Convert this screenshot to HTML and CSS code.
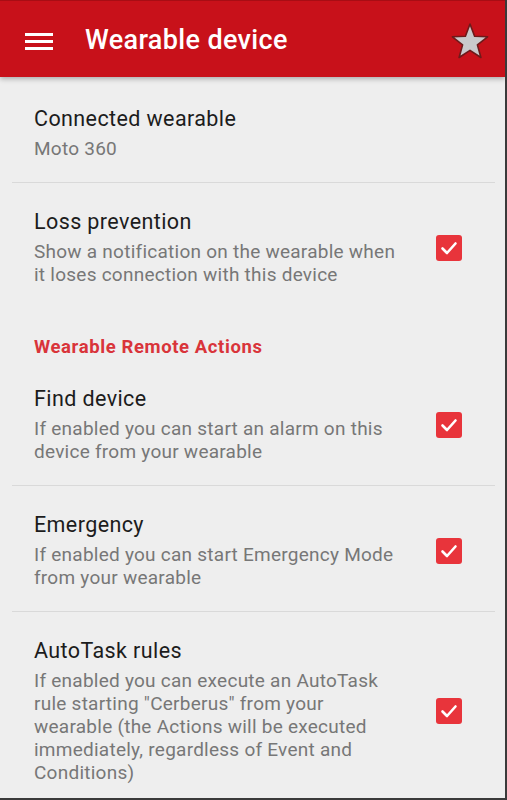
FILE: index.html
```html
<!DOCTYPE html>
<html>
<head>
<meta charset="utf-8">
<link rel="stylesheet" href="styles.css">
</head>
<body>
<div class="screen">
  <header class="appbar">
    <div class="menu"><span></span><span></span><span></span></div>
    <h1 class="title">Wearable device</h1>
    <svg class="star" width="40" height="38" viewBox="0 0 40 38">
      <polygon points="20,2 24.6,14.2 37.6,14.8 27.4,22.9 30.9,35.5 20,28.3 9.1,35.5 12.6,22.9 2.4,14.8 15.4,14.2" fill="#c9c9cb" stroke="#6e1a1a" stroke-width="1.6" stroke-linejoin="round"/>
    </svg>
  </header>
  <main class="list">
    <div class="pref divided">
      <div class="text">
        <div class="pref-title">Connected wearable</div>
        <div class="pref-summary">Moto 360</div>
      </div>
    </div>
    <div class="pref">
      <div class="text">
        <div class="pref-title">Loss prevention</div>
        <div class="pref-summary">Show a notification on the wearable when it loses connection with this device</div>
      </div>
      <div class="check"><svg width="26" height="26" viewBox="0 0 26 26"><path d="M6.5 13.5 L11 18 L19.5 8.5" fill="none" stroke="#fff" stroke-width="2.6" stroke-linecap="round" stroke-linejoin="round"/></svg></div>
    </div>
    <div class="category">Wearable Remote Actions</div>
    <div class="pref divided">
      <div class="text">
        <div class="pref-title">Find device</div>
        <div class="pref-summary">If enabled you can start an alarm on this device from your wearable</div>
      </div>
      <div class="check"><svg width="26" height="26" viewBox="0 0 26 26"><path d="M6.5 13.5 L11 18 L19.5 8.5" fill="none" stroke="#fff" stroke-width="2.6" stroke-linecap="round" stroke-linejoin="round"/></svg></div>
    </div>
    <div class="pref divided">
      <div class="text">
        <div class="pref-title">Emergency</div>
        <div class="pref-summary">If enabled you can start Emergency Mode from your wearable</div>
      </div>
      <div class="check"><svg width="26" height="26" viewBox="0 0 26 26"><path d="M6.5 13.5 L11 18 L19.5 8.5" fill="none" stroke="#fff" stroke-width="2.6" stroke-linecap="round" stroke-linejoin="round"/></svg></div>
    </div>
    <div class="pref divided">
      <div class="text">
        <div class="pref-title">AutoTask rules</div>
        <div class="pref-summary">If enabled you can execute an AutoTask rule starting "Cerberus" from your wearable (the Actions will be executed immediately, regardless of Event and Conditions)</div>
      </div>
      <div class="check"><svg width="26" height="26" viewBox="0 0 26 26"><path d="M6.5 13.5 L11 18 L19.5 8.5" fill="none" stroke="#fff" stroke-width="2.6" stroke-linecap="round" stroke-linejoin="round"/></svg></div>
    </div>
  </main>
</div>
</body>
</html>
```
FILE: styles.css
```css
html, body {
  margin: 0;
  padding: 0;
  background: #eeeeee;
}
body {
  font-family: Roboto, "Liberation Sans", sans-serif;
}
.screen {
  width: 505px;
  height: 798px;
  border-right: 2px solid #3a3a3a;
  border-bottom: 2px solid #3a3a3a;
  background: #eeeeee;
  overflow: hidden;
}
.appbar {
  height: 77px;
  background: #c8111a;
  border-top: 1px solid #a80d14;
  box-sizing: border-box;
  display: flex;
  align-items: center;
  padding: 0 15px 0 25px;
  box-shadow: 0 2px 5px rgba(0,0,0,0.28);
  position: relative;
  z-index: 1;
}
.menu {
  width: 28px;
  display: flex;
  flex-direction: column;
  gap: 4px;
  margin-top: 4px;
}
.menu span {
  display: block;
  height: 3px;
  background: #fff;
}
.title {
  flex: 1;
  margin: 2px 0 0 32px;
  color: #fff;
  font-size: 27px;
  font-weight: 500;
  letter-spacing: 0.35px;
}
.star {
  display: block;
  margin-top: 4px;
}
.list {
  padding: 3px 10px 0 12px;
}
.pref {
  display: flex;
  align-items: center;
  padding: 26px 33px 22px 22px;
}
.pref.divided {
  border-bottom: 1px solid #d9d9d9;
}
.text {
  flex: 1;
  padding-right: 38px;
}
.pref-title {
  font-size: 21.5px;
  line-height: 26px;
  letter-spacing: 0.4px;
  color: #1c1c1c;
}
.pref-summary {
  margin-top: 5px;
  font-size: 19px;
  line-height: 23px;
  letter-spacing: 0.25px;
  color: #777777;
}
.check {
  width: 26px;
  height: 26px;
  border-radius: 3px;
  background: #e8343b;
  flex: none;
}
.check svg {
  display: block;
}
.category {
  padding: 27px 22px 1px;
  font-size: 18.5px;
  line-height: 24px;
  font-weight: 700;
  letter-spacing: 0.6px;
  color: #d9343a;
}
```
